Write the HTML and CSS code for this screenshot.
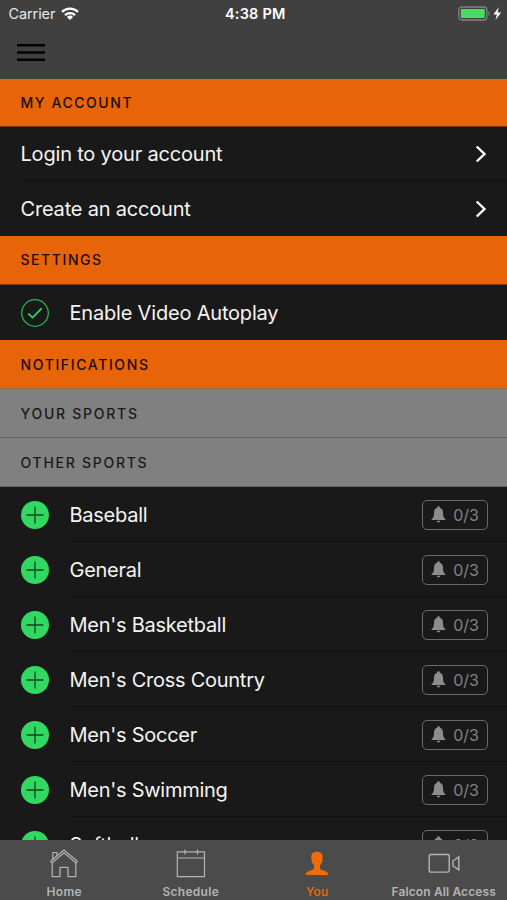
FILE: index.html
```html
<!DOCTYPE html>
<html lang="en">
<head>
<meta charset="utf-8">
<title>You</title>
<link rel="stylesheet" href="styles.css">
</head>
<body>
<svg class="defs" width="0" height="0" aria-hidden="true">
  <symbol id="plus" viewBox="0 0 28 28"><circle cx="14" cy="14" r="14" fill="#31d963"/><path d="M14 5.500v17M5.500 14h17" stroke="#11461f" stroke-width="1.300" fill="none"/></symbol>
  <symbol id="bell" viewBox="0 0 14 17"><path d="M7 0.300c.9 0 1.400.6 1.400 1.400 2.200.7 3.100 2.500 3.100 5 0 3.700.7 5.300 2.500 6.500v.8H0v-.8c1.800-1.200 2.500-2.800 2.500-6.500 0-2.500.9-4.300 3.100-5C5.600.9 6.100.3 7 .3zM5.200 14.800h3.600c-.2 1-.8 1.700-1.800 1.700s-1.600-.7-1.800-1.700z" fill="#8c8c8c"/></symbol>
  <symbol id="chevron" viewBox="0 0 12 18"><path d="M1.700 1.500 9.500 9 1.700 16.500" fill="none" stroke="#fff" stroke-width="2.400"/></symbol>
</svg>
<div class="phone">
  <header class="top">
    <div class="status">
      <div class="carrier"><span>Carrier</span>
        <svg width="18" height="14" viewBox="0 0 18 14"><g fill="none" stroke="#fff" stroke-width="2.300"><path d="M1 4.900a11.400 11.400 0 0 1 16 0"/><path d="M4 8.100a7.200 7.200 0 0 1 10 0"/></g><path d="M9 12.900 5.900 9.900a4.500 4.500 0 0 1 6.200 0z" fill="#fff"/></svg>
      </div>
      <div class="clock">4:38 PM</div>
      <svg class="battery" width="44" height="16" viewBox="0 0 44 16"><rect x=".8" y="1" width="28" height="13" rx="3" fill="none" stroke="#828282" stroke-width="1.300"/><rect x="2.800" y="3" width="24" height="9" rx="1" fill="#4cd964"/><path d="M30.500 5.200c1.500.5 1.500 4.100 0 4.600z" fill="#828282"/><path d="M40.800 1 35.500 8.500h3.400L37.400 14l5.700-7.500h-3.600z" fill="#fff"/></svg>
    </div>
    <svg class="menu" width="28" height="19" viewBox="0 0 28 19"><path d="M0 2.200h28M0 9.500h28M0 16.700h28" stroke="#000" stroke-width="2.500"/></svg>
  </header>
  <main class="list">
    <h2 class="section account"><span>MY ACCOUNT</span></h2>
    <div class="row link"><span>Login to your account</span><svg width="12" height="18"><use href="#chevron"/></svg></div>
    <div class="row link last"><span>Create an account</span><svg width="12" height="18"><use href="#chevron"/></svg></div>
    <h2 class="section settings"><span>SETTINGS</span></h2>
    <div class="row setting"><svg width="28" height="28" viewBox="0 0 28 28"><circle cx="14" cy="14" r="13.300" fill="none" stroke="#28b552" stroke-width="1.300"/><path d="m7.300 14.600 4.300 4 9-9.200" fill="none" stroke="#31d963" stroke-width="1.700"/></svg><span>Enable Video Autoplay</span></div>
    <h2 class="section notes"><span>NOTIFICATIONS</span></h2>
    <h3 class="section gray"><span>YOUR SPORTS</span></h3>
    <h3 class="section gray"><span>OTHER SPORTS</span></h3>
    <div class="row sport"><svg class="add"><use href="#plus"/></svg><span class="name">Baseball</span><span class="badge"><svg><use href="#bell"/></svg>0/3</span></div>
    <div class="row sport"><svg class="add"><use href="#plus"/></svg><span class="name">General</span><span class="badge"><svg><use href="#bell"/></svg>0/3</span></div>
    <div class="row sport"><svg class="add"><use href="#plus"/></svg><span class="name">Men's Basketball</span><span class="badge"><svg><use href="#bell"/></svg>0/3</span></div>
    <div class="row sport"><svg class="add"><use href="#plus"/></svg><span class="name">Men's Cross Country</span><span class="badge"><svg><use href="#bell"/></svg>0/3</span></div>
    <div class="row sport"><svg class="add"><use href="#plus"/></svg><span class="name">Men's Soccer</span><span class="badge"><svg><use href="#bell"/></svg>0/3</span></div>
    <div class="row sport"><svg class="add"><use href="#plus"/></svg><span class="name">Men's Swimming</span><span class="badge"><svg><use href="#bell"/></svg>0/3</span></div>
    <div class="row sport"><svg class="add"><use href="#plus"/></svg><span class="name">Softball</span><span class="badge"><svg><use href="#bell"/></svg>0/3</span></div>
  </main>
  <nav class="tabs">
    <div class="tab"><svg width="32" height="32" viewBox="0 0 32 32"><g fill="none" stroke="#b4b4b4" stroke-width="1.200"><path d="M4.200 14.800V28.600h7.800V19.400h8V28.600h7.800V14.800M2.600 13.200 16 2 29.400 13.200M3.800 15 16 4.900 28.200 15M2.600 13.200 3.800 15M29.400 13.200 28.200 15"/><path d="M4.800 11.200V4.500h4V7.800"/></g></svg><span>Home</span></div>
    <div class="tab"><svg width="32" height="32" viewBox="0 0 32 32"><path d="M2.300 3.800h27.200v24.800H2.300zM2.300 10h27.200M10 1.500v5M22.500 1.500v5" fill="none" stroke="#b4b4b4" stroke-width="1.200"/></svg><span>Schedule</span></div>
    <div class="tab active"><svg width="32" height="32" viewBox="0 0 32 32"><path d="M16 3.800c4 0 6 2 5.700 6-.1 3.500-1 6-2.700 7.500v3c0 1.500 2.500 1.800 5 2.800 2 .8 3.200 2 3.300 3.800H4.700c.1-1.800 1.300-3 3.300-3.800 2.500-1 5-1.300 5-2.800v-3c-1.700-1.500-2.600-4-2.700-7.500-.3-4 1.700-6 5.700-6z" fill="#ee6c09"/></svg><span>You</span></div>
    <div class="tab falcon"><svg width="32" height="32" viewBox="0 0 32 32"><rect x="1.200" y="6.500" width="20" height="17.600" rx="1.500" fill="none" stroke="#b4b4b4" stroke-width="1.400"/><path d="M30.800 8.900v13L25 18v-5z" fill="none" stroke="#b4b4b4" stroke-width="1.400"/></svg><span>Falcon All Access</span></div>
  </nav>
</div>
</body>
</html>
```
FILE: styles.css
```css
* { box-sizing: border-box; }
body { margin: 0; background: #191919; font-family: Inter, "Liberation Sans", sans-serif; }
.defs { position: absolute; }
.phone { display: flex; flex-direction: column; width: 507px; height: 900px; overflow: hidden; color: #f4f4f4; }
.top { flex: none; height: 79px; background: #404040; }
.status { display: grid; grid-template-columns: 1fr auto 1fr; align-items: center; height: 27px; padding: 0 5px 0 8.5px; }
.carrier { display: flex; align-items: center; gap: 6px; font-size: 14.5px; letter-spacing: -0.1px; color: #e8e8e8; }
.clock { font-size: 14.5px; font-weight: 600; letter-spacing: 0.2px; color: #fff; }
.battery { justify-self: end; }
.menu { display: block; margin: 16px 0 0 17px; }
.list { flex: 1; min-height: 0; overflow: hidden; }
.section { display: flex; align-items: center; height: 49px; margin: 0; padding: 0 20.5px; background: #e86409; border-bottom: 1px solid #7c3908; color: #1c0d02; font-size: 14px; font-weight: 500; letter-spacing: 1.56px; }
.account { height: 48px; }
.settings { padding-bottom: 1px; }
.notes { border-bottom-color: #99704e; letter-spacing: 1.63px; }
.gray { background: #808080; border-bottom-color: #626262; color: #1a1a1a; letter-spacing: 1.73px; }
.row { display: flex; align-items: center; font-size: 20px; letter-spacing: -0.19px; }
.link { justify-content: space-between; height: 54px; margin-left: 20.5px; padding-right: 20px; padding-top: 1px; border-bottom: 1px solid #101010; }
.link.last { height: 55px; border-bottom-color: #191919; }
.setting { height: 55px; padding-left: 21px; gap: 20.5px; }
.sport { height: 55px; padding: 0 19px 0 21px; background: linear-gradient(#121212, #121212) right bottom / calc(100% - 69px) 1px no-repeat; }
.sport .name { letter-spacing: -0.26px; }
.add { width: 28px; height: 28px; margin-right: 20.5px; }
.name { flex: 1; }
.badge { display: flex; align-items: center; justify-content: center; gap: 7px; width: 66px; height: 30px; border: 1.5px solid #696969; border-radius: 5px; color: #828282; font-size: 16px; letter-spacing: 0; }
.badge svg { width: 15px; height: 17px; }
.tabs { flex: none; display: grid; grid-template-columns: repeat(4, 1fr); height: 60px; padding-left: 1px; background: #4b4b4b; }
.tab { display: flex; flex-direction: column; align-items: center; padding-top: 8px; color: #b4b4b4; font-size: 12px; font-weight: 600; letter-spacing: 0.3px; white-space: nowrap; }
.tab span { line-height: 16px; margin-top: 4px; }
.falcon { letter-spacing: 0.12px; }
.active { color: #ee6c09; font-weight: 500; }
```
